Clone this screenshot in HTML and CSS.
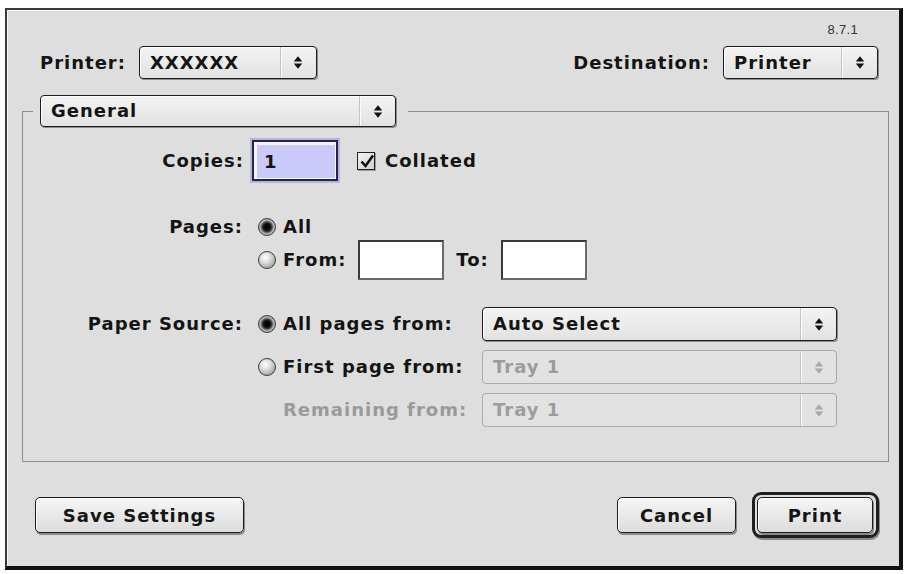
FILE: index.html
```html
<!DOCTYPE html>
<html>
<head>
<meta charset="utf-8">
<link rel="stylesheet" href="styles.css">
</head>
<body>
<div class="window">
  <div class="version">8.7.1</div>
  <div class="toprow">
    <div class="field">
      <span class="lbl">Printer:</span>
      <div class="popup popup-printer"><span class="val">XXXXXX</span><span class="arr"><svg width="10" height="15" viewBox="0 0 10 15"><path d="M0.8 6.4 L5 1.2 L9.2 6.4 Z M0.8 8.6 L5 13.8 L9.2 8.6 Z" fill="#111"/></svg></span></div>
    </div>
    <div class="field">
      <span class="lbl">Destination:</span>
      <div class="popup popup-dest"><span class="val">Printer</span><span class="arr"><svg width="10" height="15" viewBox="0 0 10 15"><path d="M0.8 6.4 L5 1.2 L9.2 6.4 Z M0.8 8.6 L5 13.8 L9.2 8.6 Z" fill="#111"/></svg></span></div>
    </div>
  </div>

  <fieldset class="group">
    <legend class="group-legend">
      <div class="popup popup-general"><span class="val">General</span><span class="arr"><svg width="10" height="15" viewBox="0 0 10 15"><path d="M0.8 6.4 L5 1.2 L9.2 6.4 Z M0.8 8.6 L5 13.8 L9.2 8.6 Z" fill="#111"/></svg></span></div>
    </legend>

    <div class="copies-row">
      <span class="lbl col-label">Copies:</span>
      <div class="textbox focused"><span>1</span></div>
      <span class="checkbox"><svg width="18" height="18" viewBox="0 0 18 18"><path d="M3.5 8.5 L7.5 13 L15 2.5" fill="none" stroke="#111" stroke-width="2.6"/></svg></span>
      <span class="lbl check-text">Collated</span>
    </div>

    <div class="pages">
      <span class="lbl col-label">Pages:</span>
      <span class="radio on"></span>
      <span class="lbl opt">All</span>
      <span class="radio r2"></span>
      <div class="range">
        <span class="lbl opt">From:</span>
        <div class="textbox"></div>
        <span class="lbl to">To:</span>
        <div class="textbox"></div>
      </div>
    </div>

    <div class="source">
      <span class="lbl col-label">Paper Source:</span>
      <span class="radio on"></span>
      <span class="lbl opt">All pages from:</span>
      <div class="popup popup-wide"><span class="val">Auto Select</span><span class="arr"><svg width="10" height="15" viewBox="0 0 10 15"><path d="M0.8 6.4 L5 1.2 L9.2 6.4 Z M0.8 8.6 L5 13.8 L9.2 8.6 Z" fill="#111"/></svg></span></div>

      <span class="radio r2"></span>
      <span class="lbl opt">First page from:</span>
      <div class="popup popup-wide disabled"><span class="val">Tray 1</span><span class="arr"><svg width="10" height="15" viewBox="0 0 10 15"><path d="M0.8 6.4 L5 1.2 L9.2 6.4 Z M0.8 8.6 L5 13.8 L9.2 8.6 Z" fill="#a8a8a8"/></svg></span></div>

      <span class="lbl opt dim r3">Remaining from:</span>
      <div class="popup popup-wide disabled"><span class="val">Tray 1</span><span class="arr"><svg width="10" height="15" viewBox="0 0 10 15"><path d="M0.8 6.4 L5 1.2 L9.2 6.4 Z M0.8 8.6 L5 13.8 L9.2 8.6 Z" fill="#a8a8a8"/></svg></span></div>
    </div>
  </fieldset>

  <div class="buttons">
    <button class="btn btn-save">Save Settings</button>
    <div class="right-buttons">
      <button class="btn btn-cancel">Cancel</button>
      <div class="default-ring"><button class="btn btn-print">Print</button></div>
    </div>
  </div>
</div>
</body>
</html>
```

FILE: styles.css
```css
html, body {
  margin: 0;
  padding: 0;
  background: #ffffff;
}

body {
  font-family: "DejaVu Sans", sans-serif;
  font-weight: bold;
  font-size: 18px;
  line-height: 20px;
  color: #141414;
}

.window {
  box-sizing: border-box;
  margin: 8px 0 0 5px;
  width: 898px;
  height: 562px;
  border-style: solid;
  border-width: 2px 4px 4px 2px;
  border-color: #3a3a3a #111 #111 #3a3a3a;
  background: #dedede;
  box-shadow: inset 1px 1px 0 #f6f6f6;
  padding: 12px 10px 0 15px;
}

.lbl {
  letter-spacing: 1px;
  white-space: nowrap;
}

.version {
  font-family: "Liberation Sans", sans-serif;
  font-weight: normal;
  font-size: 13px;
  line-height: 16px;
  color: #333;
  text-align: right;
  padding-right: 31px;
  letter-spacing: 0.3px;
}

.toprow {
  margin-top: 8px;
  display: flex;
  justify-content: space-between;
  padding: 0 11px 0 18px;
}

.field {
  display: flex;
  align-items: center;
  gap: 13px;
}

/* popup menus */
.popup {
  box-sizing: border-box;
  display: flex;
  align-items: stretch;
  height: 33px;
  border: 1px solid #1c1c1c;
  border-radius: 4px;
  background: linear-gradient(#f3f3f3, #e2e2e2);
  box-shadow: 1px 1px 0 #8e8e8e, inset 1px 1px 0 #ffffff;
}

.popup .val {
  flex: 1;
  display: flex;
  align-items: center;
  padding-left: 10px;
  letter-spacing: 1px;
  white-space: nowrap;
}

.popup .arr {
  width: 35px;
  display: flex;
  align-items: center;
  justify-content: center;
  border-left: 1px solid #c4c4c4;
  box-shadow: inset 1px 0 0 #fbfbfb;
}

.popup-printer { width: 178px; }
.popup-dest { width: 155px; }
.popup-general { width: 356px; height: 32px; }
.popup-wide { width: 355px; height: 34px; }

.popup.disabled {
  border-color: #aaaaaa;
  box-shadow: none;
  background: #e2e2e2;
  color: #9c9c9c;
}

.popup.disabled .val { font-weight: 600; }

/* group box */
.group {
  margin: 16px 0 0 0;
  padding: 13px 0 34px 0;
  border: 1px solid #8c8c8c;
  min-width: 0;
}

.group-legend {
  margin-left: 10px;
  padding: 0 12px 0 7px;
}

.col-label {
  text-align: right;
}

.copies-row {
  display: flex;
  align-items: center;
}

.copies-row .col-label {
  width: 221px;
  flex: none;
}

.textbox {
  box-sizing: border-box;
  width: 86px;
  height: 40px;
  border: 2px solid #3a3a3a;
  border-right-color: #6a6a6a;
  border-bottom-color: #6a6a6a;
  background: #ffffff;
  display: flex;
  align-items: center;
  padding-left: 9px;
}

.textbox.focused {
  margin-left: 8px;
  height: 41px;
  border-color: #24244a;
  background: #c9c9fa;
  box-shadow: 0 0 0 2px #b4b4dc, inset 1px 1px 0 2px #f4f4ff;
  padding-left: 10px;
  padding-top: 2px;
}

.checkbox {
  box-sizing: border-box;
  width: 18px;
  height: 18px;
  margin-left: 19px;
  border: 1px solid #222;
  background: linear-gradient(135deg, #f4f4f4, #cfcfcf);
  box-shadow: 1px 1px 0 #999;
  display: flex;
  overflow: visible;
}

.checkbox svg { overflow: visible; }

.check-text {
  margin-left: 10px;
}

/* radio buttons */
.radio {
  box-sizing: border-box;
  width: 18px;
  height: 18px;
  border-radius: 50%;
  border: 1px solid #3c3c3c;
  background: radial-gradient(circle at 40% 35%, #ffffff 0, #e4e4e4 30%, #a8a8a8 75%, #7a7a7a 100%);
  justify-self: end;
  align-self: center;
}

.radio.on {
  background: radial-gradient(circle at 50% 50%, #000 0, #111 3.5px, #4a4a4a 5px, #bdbdbd 7px, #8a8a8a 9px);
}

.opt {
  padding-left: 7px;
  align-self: center;
}

.dim {
  color: #9a9a9a;
}

/* pages section */
.pages {
  margin-top: 37px;
  display: grid;
  grid-template-columns: 220px 33px auto;
  grid-template-rows: 18px 40px;
  row-gap: 4px;
  align-items: center;
}

.pages .col-label { grid-row: 1; grid-column: 1; }
.pages .r2 { grid-row: 2; grid-column: 2; }

.range {
  grid-row: 2;
  grid-column: 3;
  display: flex;
  align-items: center;
}

.range .textbox { margin-left: 12px; }
.range .to { margin-left: 12px; }

/* paper source */
.source {
  margin-top: 27px;
  display: grid;
  grid-template-columns: 220px 33px 206px 355px;
  grid-template-rows: 34px 34px 34px;
  row-gap: 9px;
  align-items: center;
}

.source .r2 { grid-column: 2; }
.source .r3 { grid-column: 3; }

/* buttons */
.buttons {
  margin-top: 30px;
  display: flex;
  justify-content: space-between;
  align-items: center;
  padding: 0 10px 0 13px;
}

.right-buttons {
  display: flex;
  align-items: center;
  gap: 16px;
}

.btn {
  box-sizing: border-box;
  height: 36px;
  border: 1px solid #1c1c1c;
  border-radius: 5px;
  background: linear-gradient(#f6f6f6, #dcdcdc);
  box-shadow: 1px 2px 0 #8a8a8a, inset 1px 1px 0 #ffffff;
  font-family: "DejaVu Sans", sans-serif;
  font-weight: bold;
  font-size: 18px;
  letter-spacing: 1px;
  color: #151515;
  padding: 0;
  margin: 0;
}

.btn-save { width: 209px; }
.btn-cancel { width: 119px; }
.btn-print { width: 116px; display: block; }

.default-ring {
  border: 3px solid #1f1f1f;
  border-radius: 9px;
  padding: 2px 3px 2px 2px;
  box-shadow: 1px 2px 0 #8a8a8a;
  background: #dedede;
}
```
